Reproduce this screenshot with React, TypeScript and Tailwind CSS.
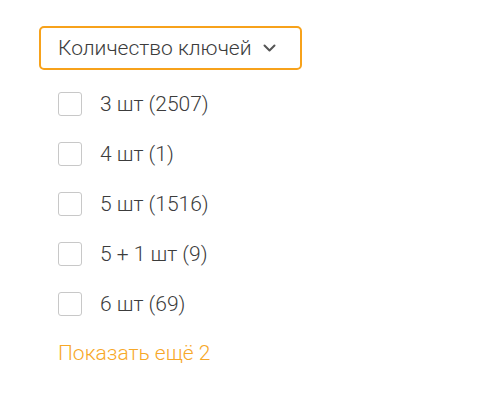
import React, { useState } from 'react';

const options = [
  { label: '3 шт', count: 2507 },
  { label: '4 шт', count: 1 },
  { label: '5 шт', count: 1516 },
  { label: '5 + 1 шт', count: 9 },
  { label: '6 шт', count: 69 },
];

const App: React.FC = () => {
  const [checked, setChecked] = useState<Record<string, boolean>>({});

  return (
    <div className="min-h-screen bg-white pt-[26px] pl-[39px] font-['Roboto',sans-serif]">
      <button className="flex h-[44px] w-[263px] items-center rounded-[5px] border-2 border-[#f7a21b] pl-[17px] pr-[24px] text-[21px] leading-[24px] font-light text-[#3c3c3c]">
        <span>Количество ключей</span>
        <svg className="ml-auto h-[8px] w-[13px] text-[#555]" viewBox="0 0 13 8" fill="none" stroke="currentColor" strokeWidth="2" strokeLinecap="round" strokeLinejoin="round">
          <path d="M1.5 1.5l5 5 5-5" />
        </svg>
      </button>

      <ul className="mt-[9px] pl-[19px]">
        {options.map((o) => (
          <li key={o.label} className="flex h-[50px] items-center">
            <label className="flex cursor-pointer items-center">
              <span
                onClick={() => setChecked({ ...checked, [o.label]: !checked[o.label] })}
                className="h-[24px] w-[24px] rounded-[3px] border border-[#c8c8c8] bg-white"
              ></span>
              <span className="ml-[18px] text-[21px] leading-[24px] font-light text-[#3c3c3c]">
                {o.label} ({o.count})
              </span>
            </label>
          </li>
        ))}
      </ul>

      <a href="#" className="mt-[12px] block pl-[19px] text-[21px] leading-[24px] font-light text-[#f7a828]">
        Показать ещё 2
      </a>
    </div>
  );
};

export default App;
